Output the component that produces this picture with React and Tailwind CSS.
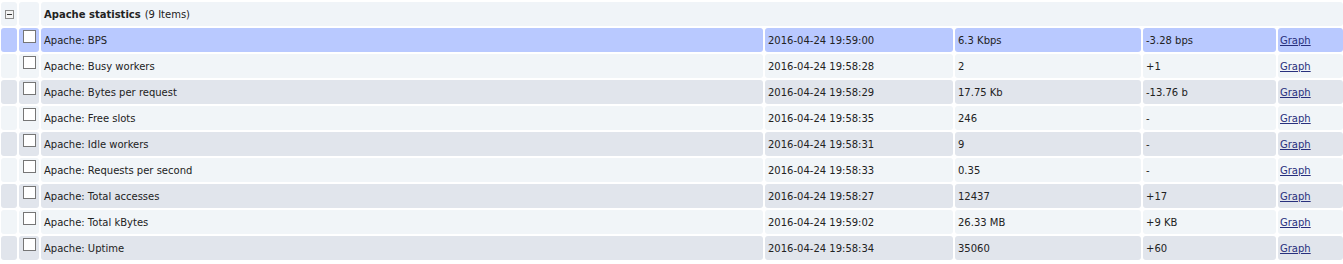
import React from "react";

const rows = [
  ["Apache: BPS", "2016-04-24 19:59:00", "6.3 Kbps", "-3.28 bps", "blue"],
  ["Apache: Busy workers", "2016-04-24 19:58:28", "2", "+1", "light"],
  ["Apache: Bytes per request", "2016-04-24 19:58:29", "17.75 Kb", "-13.76 b", "grey"],
  ["Apache: Free slots", "2016-04-24 19:58:35", "246", "-", "light"],
  ["Apache: Idle workers", "2016-04-24 19:58:31", "9", "-", "grey"],
  ["Apache: Requests per second", "2016-04-24 19:58:33", "0.35", "-", "light"],
  ["Apache: Total accesses", "2016-04-24 19:58:27", "12437", "+17", "grey"],
  ["Apache: Total kBytes", "2016-04-24 19:59:02", "26.33 MB", "+9 KB", "light"],
  ["Apache: Uptime", "2016-04-24 19:58:34", "35060", "+60", "grey"],
];

const bgMap = {
  blue: "bg-[#b9c9ff]",
  light: "bg-[#f1f5f8]",
  grey: "bg-[#e1e5ec]",
};

const gridCols =
  "grid grid-cols-[16px_20px_722px_188px_186px_133px_65px] gap-x-[2px]";

function Cell({ bg, children, className = "" }) {
  return (
    <div className={`${bg} rounded-[3px] h-[24px] flex items-center ${className}`}>
      {children}
    </div>
  );
}

export default function App() {
  return (
    <div
      className="bg-white w-[1343px] h-[264px] pt-[2px] pl-[1px] text-[10px] text-[#222222]"
      style={{ fontFamily: '"DejaVu Sans", Verdana, sans-serif' }}
    >
      <div className="flex flex-col gap-y-[2px]">
        <div className={gridCols}>
          <Cell bg="bg-[#f0f4f8]" className="justify-center">
            <div className="w-[9px] h-[9px] border border-[#8a8a8a] bg-[#f4f4f4] flex items-center justify-center">
              <div className="w-[5px] h-[1px] bg-[#333333]" />
            </div>
          </Cell>
          <Cell bg="bg-[#f0f4f8]" />
          <Cell bg="bg-[#f0f4f8]" className="col-span-5 pl-[3px]">
            <span className="font-bold">Apache statistics</span>
            <span className="ml-[4px]">(9 Items)</span>
          </Cell>
        </div>
        {rows.map(([name, date, val, change, tone]) => {
          const bg = bgMap[tone];
          return (
            <div key={name} className={gridCols}>
              <Cell bg={bg} />
              <Cell bg={bg} className="items-start">
                <div className="mt-[2px] ml-[4px] w-[13px] h-[13px] border border-[#767676] bg-white" />
              </Cell>
              <Cell bg={bg} className="pl-[3px]">{name}</Cell>
              <Cell bg={bg} className="pl-[3px]">{date}</Cell>
              <Cell bg={bg} className="pl-[3px]">{val}</Cell>
              <Cell bg={bg} className="pl-[3px]">{change}</Cell>
              <Cell bg={bg} className="pl-[2px]">
                <a href="#" className="underline text-[#28307d]">Graph</a>
              </Cell>
            </div>
          );
        })}
      </div>
    </div>
  );
}
